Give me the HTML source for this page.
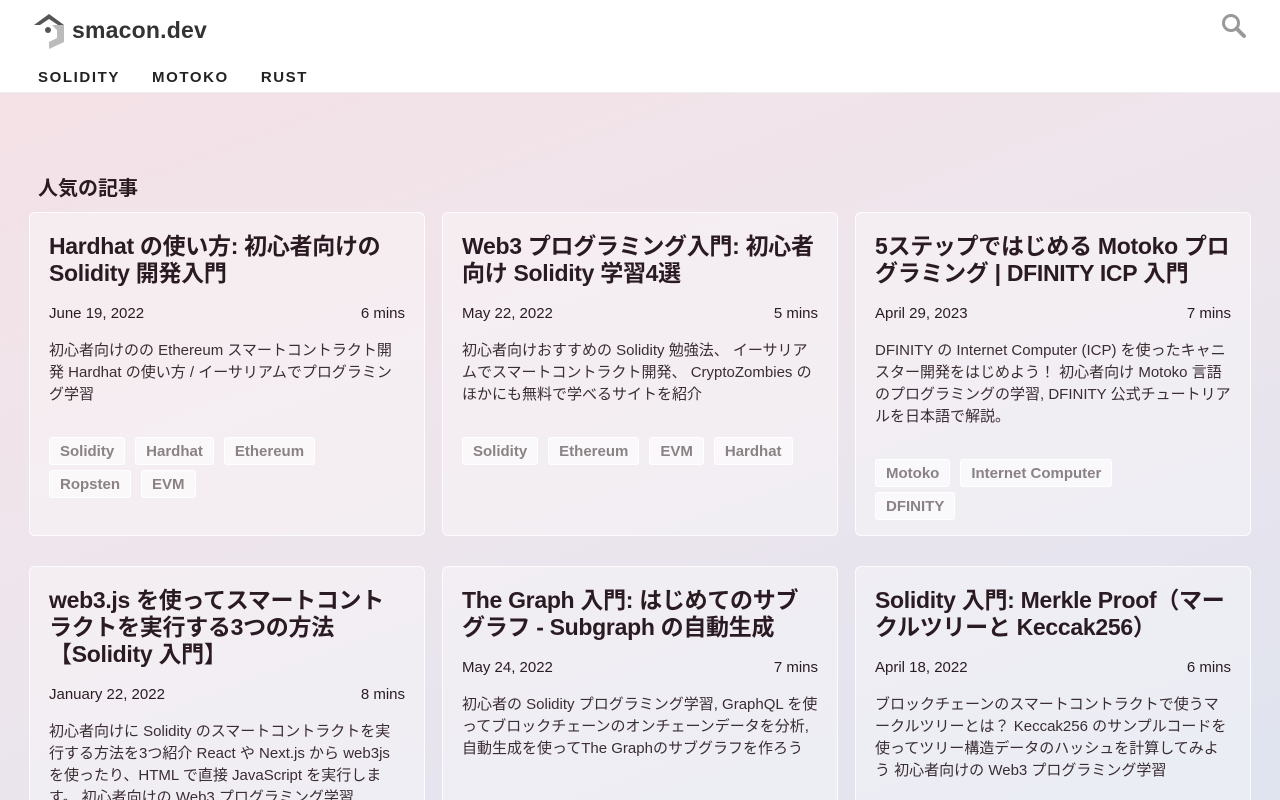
<!DOCTYPE html>
<html style="height:800px;overflow:hidden;background:#e8e4ee"><head><meta charset="utf-8"><style>
*{box-sizing:border-box;margin:0;padding:0}
body{position:relative;width:1280px;height:800px;overflow:hidden;font-family:"Liberation Sans","Noto Sans CJK JP",sans-serif;color:#2a1b22;background:linear-gradient(160deg,#f5e1e5 0%,#efe5ec 45%,#dfe4ef 100%)}
header{position:absolute;left:0;top:0;width:1280px;height:93px;background:#fff;border-bottom:1px solid #eee}
.logo{position:absolute;left:32px;top:12px;display:flex;align-items:center}
.logo span{font-weight:bold;font-size:23px;color:#333;margin-left:6px;letter-spacing:0.2px}
nav{position:absolute;left:38px;top:69px;display:flex;gap:32px;font-weight:bold;font-size:15px;letter-spacing:1.6px;color:#222}
.search{position:absolute;left:1221px;top:13px}
h2{position:absolute;left:38px;top:172px;font-size:20px;font-weight:bold;color:#2a1b22}
.card{position:absolute;width:396px;background:rgba(255,255,255,0.35);border:1px solid rgba(255,255,255,0.8);border-radius:6px;padding:20px 19px}
.card h3{font-size:23px;line-height:27px;font-weight:bold;color:#2a1b22;letter-spacing:-0.3px}
.meta{display:flex;justify-content:space-between;font-size:15px;margin-top:18px;color:#2a1b22}
.desc{font-size:15px;line-height:22px;margin-top:18px;color:#3a2d33}
.tags{margin-top:31px;display:flex;flex-wrap:wrap;gap:5px 10px}
.tags span{display:inline-block;height:28px;line-height:28px;padding:0 10px;background:rgba(255,255,255,0.6);border:1px solid rgba(255,255,255,0.9);border-radius:3px;font-weight:bold;font-size:15px;color:#8a8285}
</style></head><body>
<header>
<div class="logo"><svg width="34" height="37" viewBox="0 0 34 37"><path d="M2 13 L17 2 L32 13 L26 13 L17 7 L8 13Z" fill="#555"/><path d="M20 13 L32 13 L32 30 L17 37 L17 30 L25 26 L25 18 Z" fill="#bbb"/><circle cx="16" cy="18" r="3" fill="#555"/></svg><span>smacon.dev</span></div>
<nav><span>SOLIDITY</span><span>MOTOKO</span><span>RUST</span></nav>
<svg class="search" width="26" height="26" viewBox="0 0 26 26"><circle cx="10" cy="10" r="7.5" fill="none" stroke="#999" stroke-width="3"/><path d="M15.5 15.5 L23 23" stroke="#999" stroke-width="4" stroke-linecap="round"/></svg>
</header>
<h2>人気の記事</h2>
<div class="card" style="left:29px;top:212px;height:324px"><h3>Hardhat の使い方: 初心者向けの Solidity 開発入門</h3><div class="meta"><span>June 19, 2022</span><span>6 mins</span></div><div class="desc">初心者向けのの Ethereum スマートコントラクト開発 Hardhat の使い方 / イーサリアムでプログラミング学習</div><div class="tags"><span>Solidity</span><span>Hardhat</span><span>Ethereum</span><span>Ropsten</span><span>EVM</span></div></div>
<div class="card" style="left:442px;top:212px;height:324px"><h3>Web3 プログラミング入門: 初心者向け Solidity 学習4選</h3><div class="meta"><span>May 22, 2022</span><span>5 mins</span></div><div class="desc">初心者向けおすすめの Solidity 勉強法、 イーサリアムでスマートコントラクト開発、 CryptoZombies のほかにも無料で学べるサイトを紹介</div><div class="tags"><span>Solidity</span><span>Ethereum</span><span>EVM</span><span>Hardhat</span></div></div>
<div class="card" style="left:855px;top:212px;height:324px"><h3>5ステップではじめる Motoko プログラミング | DFINITY ICP 入門</h3><div class="meta"><span>April 29, 2023</span><span>7 mins</span></div><div class="desc">DFINITY の Internet Computer (ICP) を使ったキャニスター開発をはじめよう！ 初心者向け Motoko 言語のプログラミングの学習, DFINITY 公式チュートリアルを日本語で解説。</div><div class="tags" style="max-width:300px"><span>Motoko</span><span>Internet Computer</span><span>DFINITY</span></div></div>
<div class="card" style="left:29px;top:566px;height:300px"><h3>web3.js を使ってスマートコントラクトを実行する3つの方法【Solidity 入門】</h3><div class="meta"><span>January 22, 2022</span><span>8 mins</span></div><div class="desc">初心者向けに Solidity のスマートコントラクトを実行する方法を3つ紹介 React や Next.js から web3js を使ったり、HTML で直接 JavaScript を実行します。 初心者向けの Web3 プログラミング学習</div></div>
<div class="card" style="left:442px;top:566px;height:300px"><h3>The Graph 入門: はじめてのサブグラフ - Subgraph の自動生成</h3><div class="meta"><span>May 24, 2022</span><span>7 mins</span></div><div class="desc">初心者の Solidity プログラミング学習, GraphQL を使ってブロックチェーンのオンチェーンデータを分析, 自動生成を使ってThe Graphのサブグラフを作ろう</div></div>
<div class="card" style="left:855px;top:566px;height:300px"><h3>Solidity 入門: Merkle Proof（マークルツリーと Keccak256）</h3><div class="meta"><span>April 18, 2022</span><span>6 mins</span></div><div class="desc">ブロックチェーンのスマートコントラクトで使うマークルツリーとは？ Keccak256 のサンプルコードを使ってツリー構造データのハッシュを計算してみよう 初心者向けの Web3 プログラミング学習</div></div>
</body></html>
